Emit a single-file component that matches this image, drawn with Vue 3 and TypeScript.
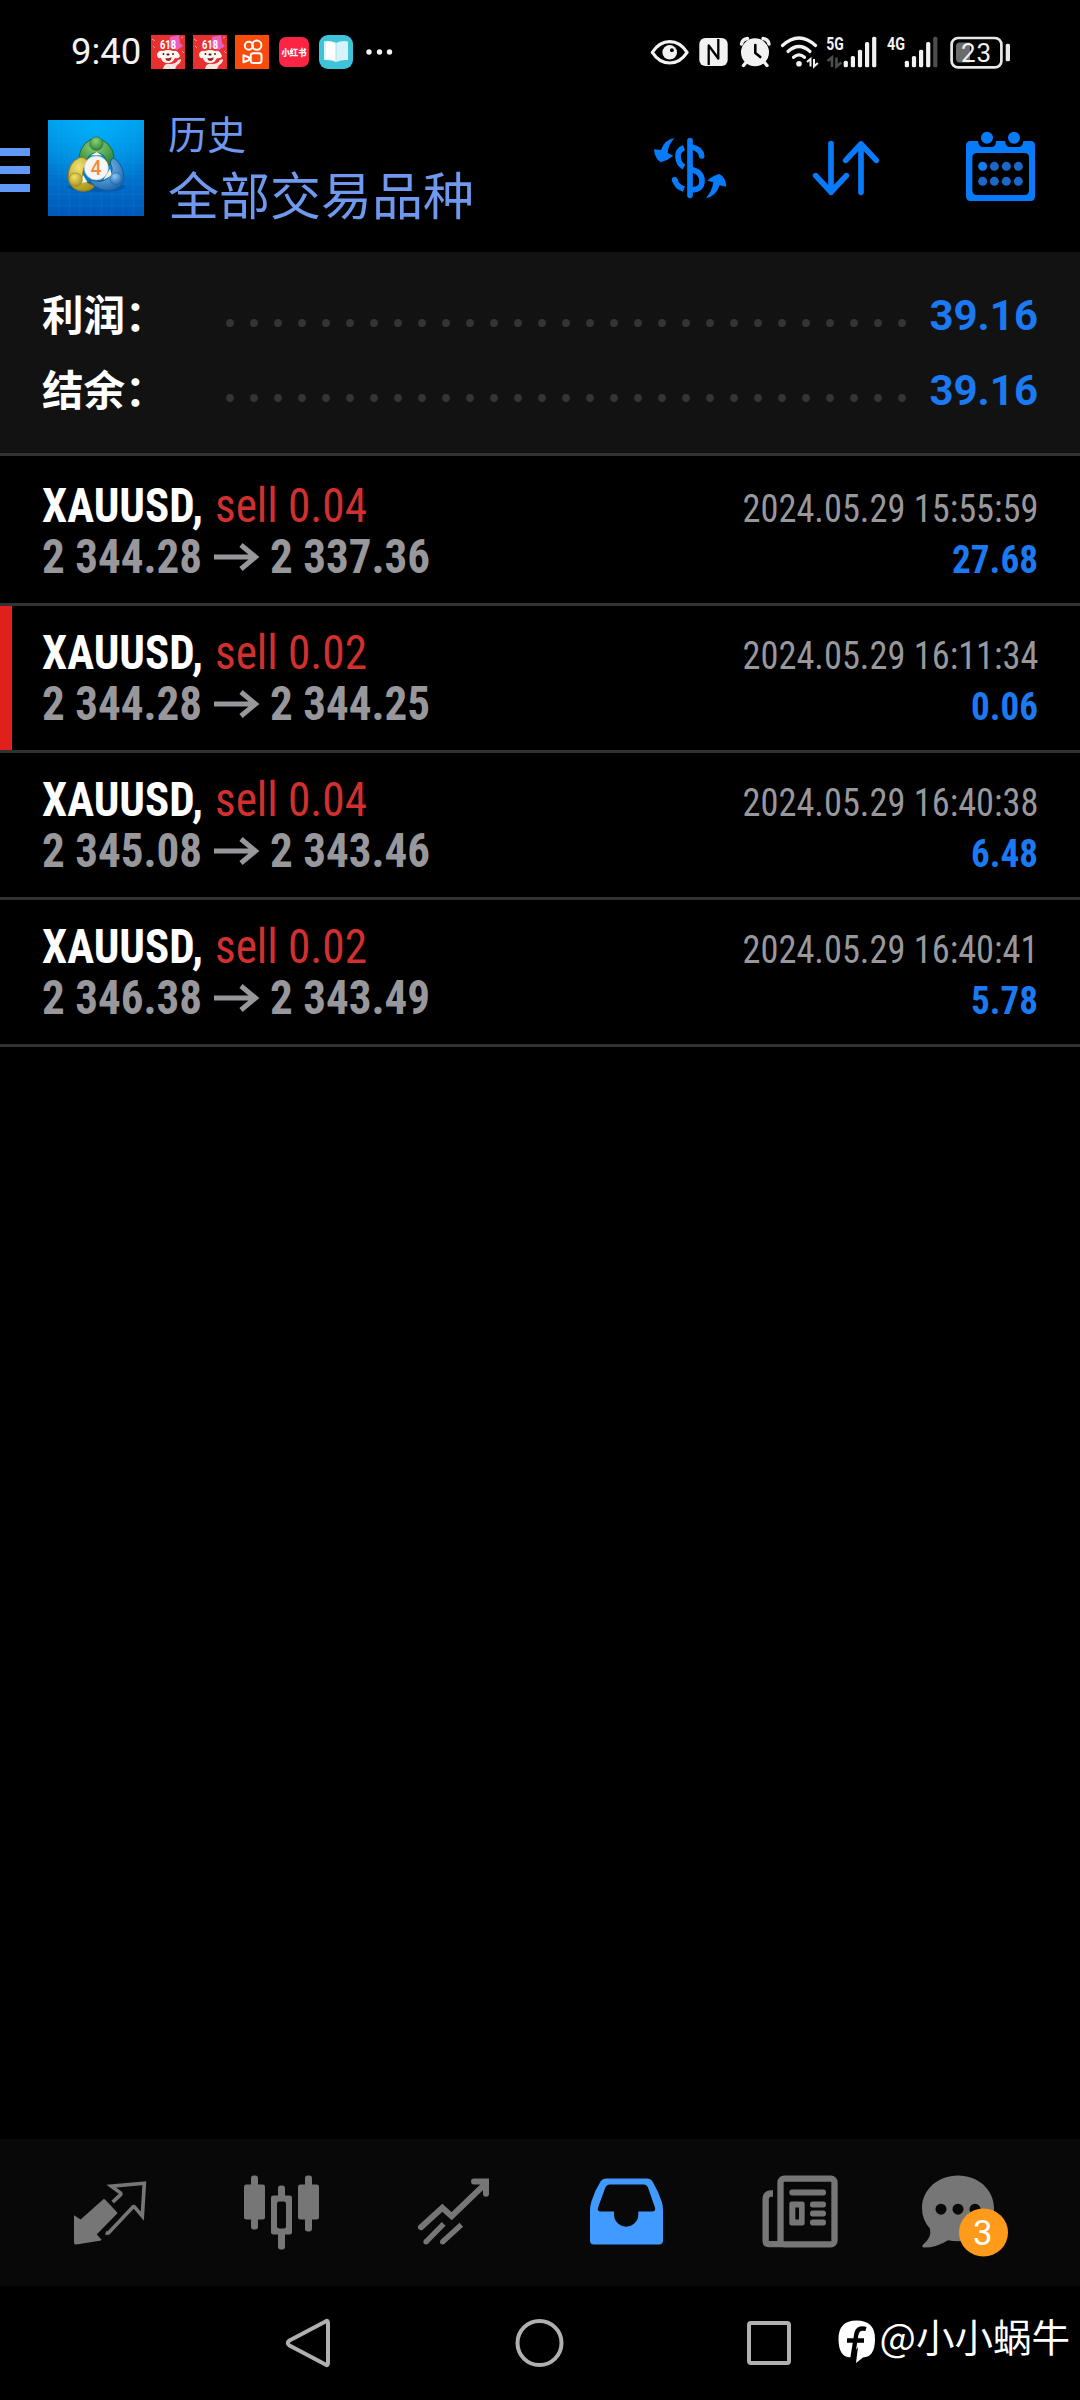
<script setup lang="ts">
interface Deal {
  lot: string
  open: string
  close: string
  time: string
  profit: string
  stop?: boolean
}

const totals = [
  { label: '利润：', value: '39.16' },
  { label: '结余：', value: '39.16' },
]

const deals: Deal[] = [
  { lot: '0.04', open: '2 344.28', close: '2 337.36', time: '2024.05.29 15:55:59', profit: '27.68' },
  { lot: '0.02', open: '2 344.28', close: '2 344.25', time: '2024.05.29 16:11:34', profit: '0.06', stop: true },
  { lot: '0.04', open: '2 345.08', close: '2 343.46', time: '2024.05.29 16:40:38', profit: '6.48' },
  { lot: '0.02', open: '2 346.38', close: '2 343.49', time: '2024.05.29 16:40:41', profit: '5.78' },
]

const profitWidth = (p: string): number => (p.length === 5 ? 86 : 67)
const barTops = [60.7, 56, 49.7, 42, 36.7]
const gridLines = [1, 2, 3, 4, 5, 6, 7, 8]
</script>

<template>
  <div class="screen">
    <div class="status">
      <span class="clock">9:40</span>
      <svg class="notes" viewBox="148 30 250 44" width="250" height="44">
        <g v-for="dx in [0, 42]" :key="dx" :transform="`translate(${dx} 0)`">
          <rect x="151" y="35" width="34" height="34" fill="#e8302f" />
          <path d="M170 37l9-2 1 8 3 3-6 4-8-3z" fill="#e85fc0" />
          <path d="M152 39l3 2M153 46l2 2M182 51l2 2M181 38l2-1" stroke="#ff9d90" stroke-width="1" />
          <text x="160" y="48.800" class="tiny" font-size="12" textLength="16" lengthAdjust="spacingAndGlyphs">618</text>
          <path d="M157 54q2-4 6-3q5-2 10 0q5-1 7 5q-1 3-5 2q-2 5-7 5q-6 0-7-5q-4 1-4-4z" fill="#fff4ef" />
          <path d="M163 69q1-6 7-5q6 0 8-4l3-1q0 4-4 6l-2 4z" fill="#fbe4dc" />
          <ellipse cx="168" cy="54.500" rx="1.600" ry="1.100" fill="#221" />
          <circle cx="163.500" cy="54" r=".9" fill="#221" />
          <circle cx="173" cy="54" r=".9" fill="#221" />
          <path d="M165.500 58q4 1 6-1q0 4-3 4t-3-3z" fill="#9c2320" />
        </g>
        <rect x="235" y="35" width="34" height="34" fill="#fa4b0a" />
        <g fill="none" stroke="#fff" stroke-width="2">
          <circle cx="248.800" cy="45.800" r="4" />
          <circle cx="256.800" cy="45.200" r="4.600" />
          <rect x="250.700" y="53.300" width="10.800" height="9.700" rx="2.500" />
          <path d="M243.500 55.300l5.500 2.200v2.600l-5.500 2.200z" stroke-linejoin="round" />
        </g>
        <rect x="279" y="37" width="30" height="30" rx="7" fill="#fb2442" />
        <text x="281.500" y="55.500" class="tiny cjk" font-size="9" textLength="25" lengthAdjust="spacingAndGlyphs">小红书</text>
        <rect x="319" y="35" width="34" height="34" rx="9" fill="#3fc3d8" />
        <path d="M324 41.500q6-1.500 12 1.500q6-3 12-1.500v18.500q-7-.5-12 2q-5-2.500-12-2z" fill="#d5f3f8" />
        <path d="M326 41.500q5-.5 10 1.500v18q-4-2-10-2z" fill="#fff" />
        <path d="M336 43v18" stroke="#a5e2ec" stroke-width="1" />
        <circle cx="369" cy="52" r="2.700" fill="#f2f2f2" />
        <circle cx="379.500" cy="52" r="2.700" fill="#f2f2f2" />
        <circle cx="389.500" cy="52" r="2.700" fill="#f2f2f2" />
      </svg>
      <svg class="system" viewBox="648 30 366 44" width="366" height="44">
        <g fill="none" stroke="#f2f2f2">
          <path d="M652.300 52.300q7-10.700 17.400-10.700t17.400 10.700q-7 10.700-17.400 10.700t-17.400-10.700z" stroke-width="3.200" stroke-linejoin="round" />
          <path d="M782.500 45.500q16.500-15 33 0" stroke-width="3.200" stroke-linecap="round" />
          <path d="M788 51.500q11-10 22 0" stroke-width="3.200" stroke-linecap="round" />
          <path d="M793.500 57.300q5.500-5 11 0" stroke-width="3.200" stroke-linecap="round" />
        </g>
        <circle cx="669.700" cy="52.300" r="7.300" fill="#f2f2f2" />
        <circle cx="671.900" cy="50.200" r="1.900" fill="#000" />
        <rect x="699.300" y="38" width="28.400" height="28" rx="6" fill="#f2f2f2" />
        <path d="M708.700 65V45.500L718.300 58.500V39" fill="none" stroke="#000" stroke-width="2.300" stroke-linejoin="round" />
        <circle cx="755" cy="52.300" r="14" fill="#f2f2f2" />
        <path d="M755.300 45v8l5 4" fill="none" stroke="#000" stroke-width="2.600" stroke-linecap="round" />
        <path d="M741.500 44q1-5 6-5.500M763 38.500q5 .5 6 5.500M746 62.500l-2.500 3M764.500 62.500l2.500 3" fill="none" stroke="#f2f2f2" stroke-width="3.400" stroke-linecap="round" />
        <circle cx="799" cy="63.700" r="2.800" fill="#f2f2f2" />
        <path d="M807 62l3.500-3v7.500M814 59v7.500l3.800-3.500" fill="none" stroke="#f2f2f2" stroke-width="2" />
        <path d="M827.500 61l4.500-3.500V67M836.500 57.500v9l4.800-4" fill="none" stroke="#4d4d4d" stroke-width="2.600" />
        <text x="826.300" y="50.300" class="net" textLength="17.500" lengthAdjust="spacingAndGlyphs">5G</text>
        <text x="887" y="50.300" class="net" textLength="18" lengthAdjust="spacingAndGlyphs">4G</text>
        <rect v-for="(t, i) in barTops" :key="'a' + i" :x="843.7 + i * 7.100" :y="t" width="4.200" :height="67.300 - t" rx="1.600" fill="#f2f2f2" />
        <rect v-for="(t, i) in barTops" :key="'b' + i" :x="904.8 + i * 7.100" :y="t" width="4.200" :height="67.300 - t" rx="1.600" :fill="i === 4 ? '#4d4d4d' : '#f2f2f2'" />
        <rect x="951.600" y="38" width="49.800" height="29.400" rx="6.500" fill="none" stroke="#e8e8e8" stroke-width="2.700" />
        <path d="M970 42.500h-10q-4 0-4 4v12q0 4 4 4h10z" fill="#6b6b6b" />
        <rect x="1005.700" y="43.700" width="4.300" height="17.500" rx="1.500" fill="#e8e8e8" />
        <text x="961" y="61.700" class="pct" textLength="30">23</text>
      </svg>
    </div>

    <header class="bar">
      <svg class="burger" viewBox="0 0 30 44" width="30" height="44">
        <path d="M0 4h30M0 22h30M0 40h30" stroke="#6199f7" stroke-width="8" />
      </svg>
      <svg class="logo" viewBox="144 360 288 288" width="96" height="96">
        <defs>
          <linearGradient id="sky" x1="0" y1="0" x2="0" y2="1">
            <stop offset="0" stop-color="#009bea" />
            <stop offset="1" stop-color="#0058b8" />
          </linearGradient>
          <radialGradient id="glow" cx=".5" cy=".05" r=".7">
            <stop offset="0" stop-color="#00b4ff" stop-opacity=".8" />
            <stop offset="1" stop-color="#00b4ff" stop-opacity="0" />
          </radialGradient>
          <radialGradient id="gg" cx=".45" cy=".3" r=".8"><stop offset="0" stop-color="#8fd07c" /><stop offset="1" stop-color="#1c7a2c" /></radialGradient>
          <radialGradient id="yg" cx=".4" cy=".3" r=".8"><stop offset="0" stop-color="#f3e271" /><stop offset="1" stop-color="#a08a12" /></radialGradient>
          <radialGradient id="bg" cx=".4" cy=".3" r=".8"><stop offset="0" stop-color="#8bc7f3" /><stop offset="1" stop-color="#135fa8" /></radialGradient>
        </defs>
        <rect x="144" y="360" width="288" height="288" fill="url(#sky)" />
        <rect x="144" y="360" width="288" height="288" fill="url(#glow)" />
        <path v-for="n in gridLines" :key="n" :d="`M${144 + n * 32} 360v288M144 ${360 + n * 32}h288`" stroke="#3fb2f5" stroke-opacity=".18" stroke-width="2" />
        <ellipse cx="290" cy="560" rx="86" ry="16" fill="#003f86" opacity=".35" />
        <path d="M288 414q46 10 54 54q-2 24-20 30q-2-38-34-40q-26 2-30 36q-22-6-20-30q10-42 50-50z" fill="url(#gg)" stroke="#1c6b35" stroke-width="3" />
        <path d="M240 472q-36 14-36 62q8 42 52 40q22-4 30-18q-36-4-38-34q0-20 16-34q-6-18-24-16z" fill="url(#yg)" stroke="#857818" stroke-width="3" />
        <path d="M342 474q28 20 30 60q-4 36-50 38q-42-4-54-34q36 14 56-4q20-20 8-42q-2-14 10-18z" fill="url(#bg)" stroke="#15599b" stroke-width="3" />
        <path d="M250 526l12 20-22 4zM310 540l26-14-6-20zM272 466h34l-16-10z" fill="#f2f4dc" />
        <circle cx="289" cy="431" r="20" fill="url(#gg)" stroke="#256f35" stroke-width="2" />
        <circle cx="227" cy="539" r="20" fill="url(#yg)" stroke="#93861e" stroke-width="2" />
        <circle cx="348" cy="536" r="18" fill="url(#bg)" stroke="#1f68ac" stroke-width="2" />
        <circle cx="289" cy="504" r="36" fill="#f8f6f4" stroke="#b9c3c4" stroke-width="2" />
        <text x="288" y="525" text-anchor="middle" class="four">4</text>
      </svg>
      <div class="titles">
        <span class="sub">历史</span>
        <span class="main">全部交易品种</span>
      </div>
      <div class="actions">
        <svg viewBox="60 390 240 222" width="80" height="74">
          <g fill="none" stroke="#087bfa" stroke-width="17" stroke-linecap="butt">
            <path d="M180 422v164" stroke-linecap="round" />
            <path d="M162 443q-20 8-18 29t18 29" />
            <path d="M186 441q27 6 29 27" stroke-linecap="round" />
            <path d="M180 508q35 5 36 34t-34 27" />
            <path d="M134 539q6 21 28 28" />
            <path d="M134 539l1 2" stroke-linecap="round" />
          </g>
          <path d="M134 414Q104 418 93 450L72 448Q74 476 92 487Q112 482 130 467L113 459Q115 432 134 414Z" fill="#087bfa" />
          <path d="M228 594Q258 590 269 556L289 560Q288 532 268 522Q248 527 232 542L250 547Q246 574 228 594Z" fill="#087bfa" />
        </svg>
        <svg viewBox="540 390 216 222" width="72" height="74">
          <path d="M603 431v146M557 527l46 49 46-49M693 432v145M647 481l46-49 46 49" fill="none" stroke="#087bfa" stroke-width="17" stroke-linecap="round" stroke-linejoin="round" />
        </svg>
        <svg viewBox="1002 390 216 222" width="72" height="74">
          <path fill-rule="evenodd" d="M1022 423H1044Q1046 441 1060 441H1084Q1098 441 1098 423H1125Q1127 441 1140 441H1166Q1178 441 1180 423H1201Q1215 423 1215 437V589Q1215 603 1201 603H1022Q1008 603 1008 589V437Q1008 423 1022 423ZM1041 459Q1027 459 1027 473V571Q1027 585 1041 585H1183Q1197 585 1197 571V473Q1197 459 1183 459Z" fill="#087bfa" />
          <circle cx="1071" cy="413" r="18" fill="#087bfa" />
          <circle cx="1152" cy="413" r="18" fill="#087bfa" />
          <template v-for="(y, r) in [499, 544]" :key="y">
            <circle v-for="(x, c) in [1058, 1093, 1129, 1165]" :key="x" :cx="x" :cy="y" r="13.500" :fill="r + c === 0 ? '#147ef5' : '#1a69c8'" />
          </template>
        </svg>
      </div>
    </header>

    <section class="totals">
      <div v-for="t in totals" :key="t.label" class="total">
        <span class="label">{{ t.label }}</span>
        <svg class="dots" width="680" height="8" viewBox="0 0 680 8">
          <circle v-for="n in 29" :key="n" :cx="4 + (n - 1) * 24" cy="4" r="3.900" fill="#343434" />
        </svg>
        <span class="value">{{ t.value }}</span>
      </div>
    </section>

    <ul class="deals">
      <li v-for="d in deals" :key="d.time" :class="['deal', { stop: d.stop }]">
        <div class="line">
          <svg width="340" height="51" class="cond">
            <text x="0" y="38" class="sym" textLength="161" lengthAdjust="spacingAndGlyphs">XAUUSD,</text>
            <text x="173" y="38" class="side" textLength="152" lengthAdjust="spacingAndGlyphs">sell {{ d.lot }}</text>
          </svg>
          <svg width="300" height="51" class="cond">
            <text x="4.500" y="38" class="time" textLength="296" lengthAdjust="spacingAndGlyphs">{{ d.time }}</text>
          </svg>
        </div>
        <div class="line">
          <svg width="400" height="51" class="cond">
            <text x="0" y="38" class="price" textLength="160" lengthAdjust="spacingAndGlyphs">{{ d.open }}</text>
            <path d="M172 22h41M199 10l14.500 12-14.500 12" fill="none" stroke="#98989c" stroke-width="5" />
            <text x="228" y="38" class="price" textLength="160" lengthAdjust="spacingAndGlyphs">{{ d.close }}</text>
          </svg>
          <svg width="120" height="51" class="cond">
            <text :x="120 - profitWidth(d.profit)" y="38" class="profit" :textLength="profitWidth(d.profit)" lengthAdjust="spacingAndGlyphs">{{ d.profit }}</text>
          </svg>
        </div>
      </li>
    </ul>

    <nav class="tabs">
      <svg viewBox="66 127.500 288 240" width="96" height="80">
        <path d="M190 206q3-1 6 2l35 37q2 3 0 5l-61 62 15 16q-2 3-6 3l-70 11q-7 1-7-6v-82l20 13z" fill="#767676" />
        <path d="M218 215l23-22q3-3 0-6l-27-20 99-9-6 99-23-27q-3-3-6 0l-71 76q-4 3-10 1" fill="none" stroke="#767676" stroke-width="11" />
      </svg>
      <svg viewBox="582 127.500 288 240" width="96" height="80">
        <g fill="#767676">
          <rect x="633" y="135" width="21" height="162" rx="8" />
          <rect x="612" y="162" width="63" height="105" rx="7" />
          <rect x="795" y="135" width="21" height="168" rx="8" />
          <rect x="774" y="162" width="63" height="105" rx="7" />
          <rect x="714" y="165" width="21" height="192" rx="8" />
          <rect x="693" y="195" width="63" height="117" rx="7" />
        </g>
        <rect x="711" y="213" width="27" height="81" rx="7" fill="#080808" />
      </svg>
      <svg viewBox="48 127.500 288 240" width="96" height="80">
        <path d="M93 290l64-58 28 25 103-99M252 153h36v37" fill="none" stroke="#767676" stroke-width="18" stroke-linecap="round" />
        <path d="M108 334l53-54M158 334l56-51" fill="none" stroke="#767676" stroke-width="16" />
        <circle cx="108" cy="334" r="8" fill="#767676" />
        <circle cx="158" cy="334" r="8" fill="#767676" />
      </svg>
      <svg viewBox="564 127.500 288 240" width="96" height="80">
        <path fill-rule="evenodd" d="M648 144H770Q782 144 788 154Q806 184 816 216Q819 226 819 240V330Q819 342 807 342H612Q600 342 600 330V240Q600 228 604 214Q614 180 632 152Q638 144 648 144ZM660 162Q650 162 646 171L624 232Q621 243 632 243H672V252A36 36 0 0 0 745 252V243H786Q798 243 795 232L774 171Q770 162 761 162Z" fill="#419aff" />
      </svg>
      <svg viewBox="30 127.500 288 240" width="96" height="80">
        <g fill="none" stroke="#767676" stroke-width="19">
          <rect x="121.500" y="144.500" width="162" height="197" rx="11" />
          <path d="M99 189h-8q-14 2-14 16v126q0 10 10 10h40" />
        </g>
        <g fill="#767676">
          <rect x="148" y="177" width="110" height="18" rx="8" />
          <rect x="210" y="213" width="48" height="18" rx="8" />
          <rect x="210" y="240" width="48" height="18" rx="8" />
          <rect x="210" y="267" width="48" height="18" rx="8" />
          <path fill-rule="evenodd" d="M155 213h32q7 0 7 7v58q0 7-7 7h-32q-7 0-7-7v-58q0-7 7-7zM166 231v36h11v-36z" />
        </g>
      </svg>
      <svg viewBox="546 127.500 288 240" width="96" height="80" class="chat">
        <path d="M654 135c60 0 108 42 108 98s-48 99-108 99q-16 0-30-3q-34 22-72 22q-9-2-2-10q26-20 20-46q-24-28-24-62c0-56 48-98 108-98z" fill="#767676" />
        <circle cx="603" cy="236" r="16.500" fill="#080808" />
        <circle cx="654" cy="236" r="16.500" fill="#080808" />
        <circle cx="705" cy="236" r="16.500" fill="#080808" />
        <ellipse cx="730.500" cy="306" rx="73.500" ry="72" fill="#ff9a1b" />
        <text x="728" y="342" text-anchor="middle" class="badge">3</text>
      </svg>
    </nav>

    <footer class="keys">
      <svg viewBox="0 0 56 56" width="56" height="56">
        <path d="M44.500 6.500Q47 4.500 47 8V48Q47 51.500 44.500 49.500L8.500 30.500Q5 28 8.500 25.500Z" fill="none" stroke="#b0b0b0" stroke-width="4" stroke-linejoin="round" />
      </svg>
      <svg viewBox="0 0 56 56" width="56" height="56">
        <circle cx="28.500" cy="28" r="22" fill="none" stroke="#b0b0b0" stroke-width="4" />
      </svg>
      <svg viewBox="0 0 56 56" width="56" height="56">
        <rect x="8" y="8" width="40" height="40" rx="2" fill="none" stroke="#b0b0b0" stroke-width="4" />
      </svg>
      <div class="mark">
        <svg viewBox="0 0 38 44" width="38" height="44">
          <path d="M18.500 0.500Q37 0.500 37 19Q37 37 25 37.500L18 43L20 27L12.500 37.500Q0.500 37 0.500 19Q0.500 0.500 18.500 0.500Z" fill="#fff" />
          <path d="M28 9Q19.500 6.500 18.200 15L14.500 38M9 20.500H26" fill="none" stroke="#000" stroke-width="4.400" />
        </svg>
        <span>@小小蜗牛</span>
      </div>
    </footer>
  </div>
</template>

<style>
html,
body {
  margin: 0;
  background: #000;
}
</style>

<style scoped>
.screen {
  width: 1080px;
  height: 2400px;
  display: flex;
  flex-direction: column;
  background: #000;
  color: #fff;
  font-family: Roboto, "Noto Sans CJK SC", sans-serif;
  overflow: hidden;
}
svg {
  display: block;
  flex: none;
}
.status {
  display: flex;
  align-items: center;
  height: 104px;
  padding: 0 66px 0 71px;
  box-sizing: border-box;
}
.clock {
  width: 77px;
  font-size: 36.500px;
  line-height: 44px;
  color: #f2f2f2;
}
.system {
  margin-left: auto;
}
.tiny {
  font-family: Roboto, "Noto Sans CJK SC", sans-serif;
  font-weight: 700;
  fill: #fff;
}
.tiny.cjk {
  font-family: "Noto Sans CJK SC", sans-serif;
  font-weight: 900;
}
.net {
  font-size: 18.500px;
  font-weight: 700;
  fill: #f2f2f2;
}
.pct {
  font-size: 26px;
  fill: #f2f2f2;
}
.bar {
  display: flex;
  height: 148px;
  box-sizing: border-box;
  padding: 8px 42px 0 0;
}
.burger {
  margin-top: 36px;
}
.logo {
  margin: 8px 0 0 18px;
}
.four {
  font-size: 58px;
  font-weight: 500;
  fill: #ee8b3a;
}
.titles {
  display: flex;
  flex-direction: column;
  margin: -7px 0 0 24px;
  font-family: "Noto Sans CJK SC", sans-serif;
  color: #6f99ee;
}
.sub {
  font-size: 39px;
  line-height: 54px;
  letter-spacing: 0;
}
.main {
  font-size: 51px;
  line-height: 68px;
}
.actions {
  display: flex;
  align-items: flex-start;
  margin: 18px 2px 0 auto;
  gap: 82px;
}
.actions svg:first-child {
  margin-right: -2px;
}
.totals {
  height: 204px;
  box-sizing: border-box;
  border-bottom: 3px solid #323232;
  background: #121212;
  padding: 26px 42px 0;
}
.total {
  display: flex;
  align-items: center;
  height: 75px;
}
.label {
  width: 184px;
  margin-top: -6px;
  font: 700 41.500px/62px "Noto Sans CJK SC", sans-serif;
  white-space: nowrap;
}
.dots {
  margin-top: 15px;
}
.value {
  margin-left: auto;
  font-size: 42px;
  font-weight: 700;
  color: #1b7af2;
}
.deals {
  list-style: none;
  margin: 0;
  padding: 0;
}
.deal {
  height: 147px;
  box-sizing: border-box;
  border-bottom: 3px solid #323232;
  padding: 25px 42px 0;
}
.deal:first-child {
  height: 150px;
  padding-top: 28px;
}
.deal.stop {
  background: linear-gradient(#e0201d, #e0201d) 0 0 / 12px 100% no-repeat;
}
.line {
  display: flex;
  justify-content: space-between;
  height: 51px;
}
.cond {
  overflow: visible;
  font-family: "Roboto Condensed", Roboto, sans-serif;
  font-stretch: 75%;
}
.sym {
  font-size: 48px;
  font-weight: 700;
  fill: #fff;
}
.side {
  font-size: 48px;
  fill: #d22f2f;
}
.price {
  font-size: 48px;
  font-weight: 700;
  fill: #98989c;
}
.time {
  font-size: 39px;
  fill: #98989c;
}
.profit {
  font-size: 39px;
  font-weight: 700;
  fill: #1b7af2;
}
.tabs {
  display: flex;
  align-items: center;
  justify-content: space-between;
  height: 147px;
  margin-top: auto;
  box-sizing: border-box;
  padding: 0 62px;
  background: #080808;
}
.chat {
  overflow: visible;
}
.badge {
  font-size: 104px;
  fill: #fff;
}
.keys {
  position: relative;
  display: flex;
  align-items: center;
  justify-content: space-between;
  height: 114px;
  box-sizing: border-box;
  padding: 0 283px 0 281px;
}
.mark {
  position: absolute;
  right: 10px;
  top: 20px;
  display: flex;
  align-items: center;
  gap: 4px;
  font: 400 38.500px/56px "Noto Sans CJK SC", sans-serif;
  white-space: nowrap;
}
.mark svg {
  margin-top: 14px;
}
</style>
